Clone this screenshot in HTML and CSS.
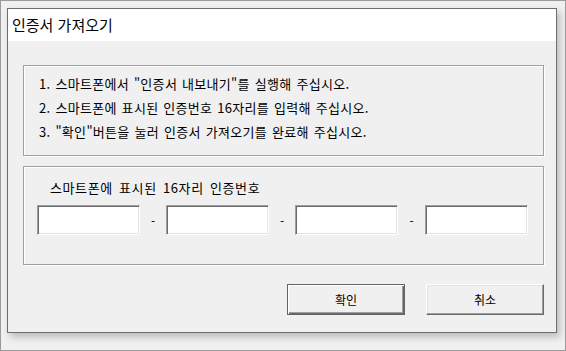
FILE: index.html
```html
<!DOCTYPE html>
<html lang="ko">
<head>
  <meta charset="UTF-8" />
  <title>인증서 가져오기</title>
  <meta name="viewport" content="width=device-width, initial-scale=1.0">
  <link rel="stylesheet" href="styles.css">
</head>
<body>
  <div class="screen">
    <div class="dialog">
      <div class="titlebar">인증서 가져오기</div>

      <div class="dialog-body">
        <div class="group guide">
          <p>1. 스마트폰에서 "인증서 내보내기"를 실행해 주십시오.</p>
          <p>2. 스마트폰에 표시된 인증번호 16자리를 입력해 주십시오.</p>
          <p>3. "확인"버튼을 눌러 인증서 가져오기를 완료해 주십시오.</p>
        </div>

        <div class="group code">
          <div class="code-label">스마트폰에 표시된 16자리 인증번호</div>
          <div class="code-row">
            <input class="code-box" type="text" maxlength="4">
            <span class="dash">-</span>
            <input class="code-box" type="text" maxlength="4">
            <span class="dash">-</span>
            <input class="code-box" type="text" maxlength="4">
            <span class="dash">-</span>
            <input class="code-box" type="text" maxlength="4">
          </div>
        </div>

        <div class="button-row">
          <button class="btn default">확인</button>
          <button class="btn">취소</button>
        </div>
      </div>
    </div>
  </div>
</body>
</html>
```

FILE: styles.css
```css
* {
  box-sizing: border-box;
}
body {
  margin: 0;
  font-family: "Noto Sans CJK KR", "Noto Sans", sans-serif;
  color: #000;
}
.screen {
  width: 566px;
  height: 351px;
  border: 1px solid #9a9a9a;
  background: #f0f0f0;
  padding: 7px 0 0 6px;
}
.dialog {
  width: 550px;
  height: 325px;
  border: 1px solid #6e6e6e;
  background: #f0f0f0;
  box-shadow: 3px 4px 7px rgba(0,0,0,0.22);
}
.titlebar {
  height: 32px;
  background: #fff;
  padding-left: 4px;
  font-size: 15px;
  line-height: 31px;
}
.dialog-body {
  padding: 24px 12px 0 15px;
}
.group {
  border: 1px solid #a0a0a0;
  box-shadow: inset 1px 1px 0 #fff, 1px 1px 0 #fff;
}
.guide {
  height: 91px;
  padding: 6px 15px 0;
}
.guide p {
  margin: 0;
  font-size: 13px;
  line-height: 24px;
  letter-spacing: 0.3px;
  word-spacing: 1px;
}
.code {
  margin-top: 10px;
  height: 99px;
  padding: 13px 14px 0 13px;
}
.code-label {
  padding-left: 13px;
  font-size: 13px;
  line-height: 16px;
  letter-spacing: 0.6px;
  word-spacing: 2px;
}
.code-row {
  display: flex;
  align-items: center;
  margin-top: 9px;
}
.code-box {
  width: 103px;
  height: 30px;
  margin: 0;
  padding: 0 4px;
  border: 1px solid;
  border-color: #a0a0a0 #fff #fff #a0a0a0;
  box-shadow: inset 1px 1px 0 #696969, inset -1px -1px 0 #e3e3e3;
  background: #fff;
  outline: none;
}
.dash {
  width: 26px;
  text-align: center;
  font-size: 12px;
}
.dash:nth-child(6) {
  width: 27px;
}
.button-row {
  display: flex;
  justify-content: flex-end;
  gap: 21px;
  margin-top: 19px;
}
.btn {
  width: 118px;
  height: 31px;
  margin: 0;
  padding: 0;
  font-family: inherit;
  font-size: 12px;
  color: #000;
  background: #f0f0f0;
  border: 1px solid;
  border-color: #fff #696969 #696969 #fff;
  box-shadow: inset -1px -1px 0 #a0a0a0, inset 1px 1px 0 #e3e3e3;
}
.btn.default {
  border: 1px solid #646464;
  box-shadow: inset 1px 1px 0 #fff, inset -1px -1px 0 #696969, inset -2px -2px 0 #a0a0a0;
}
```
